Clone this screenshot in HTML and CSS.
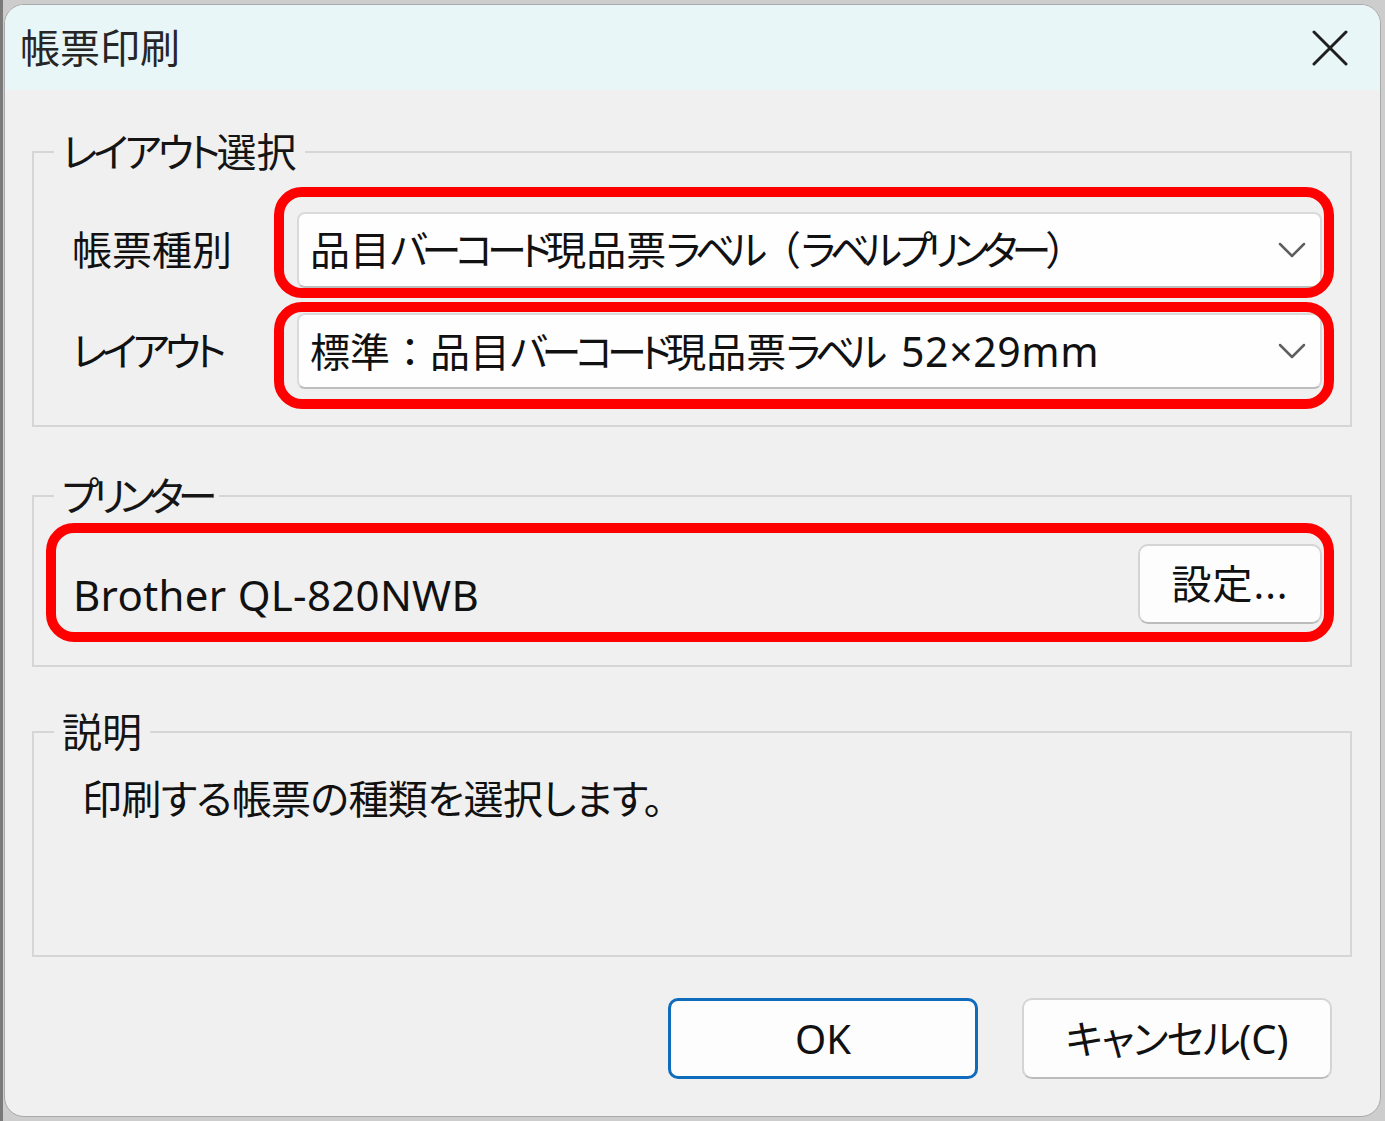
FILE: index.html
```html
<!DOCTYPE html>
<html lang="ja">
<head>
<meta charset="utf-8">
<title>帳票印刷</title>
<link rel="stylesheet" href="styles.css">
</head>
<body>
<div class="desk">
  <div class="dialog">
    <div class="titlebar">
      <span class="title">帳票印刷</span>
      <svg class="close" width="36" height="36" viewBox="0 0 36 36"><path d="M2 2 L34 34 M34 2 L2 34" stroke="#1f1f1f" stroke-width="3" stroke-linecap="round"/></svg>
    </div>
    <div class="content">
      <fieldset class="group g-layout">
        <legend class="legend"><span class="kn">レイアウト</span>選択</legend>
        <div class="row">
          <span class="label">帳票種別</span>
          <div class="combo">
            <span class="combo-text">品目<span class="kn">バーコード</span>現品票<span class="kn">ラベル</span><span class="fw">（</span><span class="kn">ラベルプリンター</span><span class="fw">）</span></span>
            <svg class="chev" width="28" height="16" viewBox="0 0 28 16"><path d="M2 2 L14 14 L26 2" fill="none" stroke="#5f5f5f" stroke-width="2.5" stroke-linecap="round" stroke-linejoin="round"/></svg>
            <div class="mark mark-1"></div>
          </div>
        </div>
        <div class="row row-2">
          <span class="label"><span class="kn">レイアウト</span></span>
          <div class="combo">
            <span class="combo-text">標準<span class="fw">：</span>品目<span class="kn">バーコード</span>現品票<span class="kn">ラベル</span><span class="num">52×29mm</span></span>
            <svg class="chev" width="28" height="16" viewBox="0 0 28 16"><path d="M2 2 L14 14 L26 2" fill="none" stroke="#5f5f5f" stroke-width="2.5" stroke-linecap="round" stroke-linejoin="round"/></svg>
            <div class="mark mark-2"></div>
          </div>
        </div>
      </fieldset>

      <fieldset class="group g-printer">
        <legend class="legend"><span class="kn">プリンター</span></legend>
        <div class="printer-row">
          <span class="printer-name">Brother QL-820NWB</span>
          <button class="btn btn-setting">設定...</button>
          <div class="mark mark-3"></div>
        </div>
      </fieldset>

      <fieldset class="group g-desc">
        <legend class="legend">説明</legend>
        <p class="desc">印刷する帳票の種類を選択します。</p>
      </fieldset>

      <div class="actions">
        <button class="btn btn-ok">OK</button>
        <button class="btn btn-cancel"><span class="kn-soft">キャンセル</span>(C)</button>
      </div>
    </div>
  </div>
</div>
</body>
</html>
```

FILE: styles.css
```css
* { box-sizing: border-box; }

html, body {
  margin: 0;
  padding: 0;
}

body {
  width: 1385px;
  height: 1121px;
  overflow: hidden;
  background: #cdcdcd;
  font-family: "Noto Sans", "Noto Sans CJK JP", sans-serif;
  font-feature-settings: "palt";
  color: #111;
}

.kn { letter-spacing: -5px; }
.kn-soft { letter-spacing: -1.5px; }
.fw { font-feature-settings: normal; }

.desk {
  height: 1121px;
  padding: 4px;
  border-left: 3px solid #7a7a7a;
  padding-left: 1px;
}

.dialog {
  width: 1377px;
  height: 1113px;
  background: #f0f0f0;
  border: 1px solid #a9a9a9;
  border-radius: 20px;
  overflow: hidden;
  display: flex;
  flex-direction: column;
}

.titlebar {
  height: 85px;
  flex: none;
  background: #e9f6f8;
  display: flex;
  align-items: center;
  justify-content: space-between;
  padding: 0 32px 0 15px;
}

.title {
  font-size: 40px;
  line-height: 50px;
  color: #262626;
}

.close { display: block; }

.content {
  padding: 0 28px 0 27px;
}

.group {
  margin: 0;
  min-width: 0;
  border: 2px solid #d6d6d6;
}

.legend {
  font-size: 40px;
  line-height: 50px;
  padding: 0 8px;
  color: #151515;
}
.legend .kn { letter-spacing: -4px; }

.g-layout {
  margin-top: 37px;
  padding: 35px 28px 36px 38px;
}
.g-layout .legend { margin-left: -18px; }

.row {
  display: grid;
  grid-template-columns: 225px 1fr;
  align-items: center;
}
.row-2 { margin-top: 25px; }

.label {
  font-size: 40px;
  line-height: 50px;
}

.combo {
  position: relative;
  height: 76px;
  background: #fefefe;
  border: 2px solid #dadada;
  border-bottom-color: #bdbdbd;
  border-radius: 8px;
  display: flex;
  align-items: center;
  justify-content: space-between;
  padding: 0 14px 0 11px;
}

.combo-text {
  font-size: 40px;
  line-height: 50px;
  white-space: nowrap;
}
.combo-text .kn { letter-spacing: -6px; }

.num {
  margin-left: 20px;
  font-size: 41px;
  letter-spacing: 0.6px;
}

.chev { display: block; }

.mark {
  position: absolute;
  border: 10px solid #ff0000;
  border-radius: 28px;
  pointer-events: none;
}
.mark-1 { top: -27px; bottom: -12px; left: -25px; right: -14px; }
.mark-2 { top: -13px; bottom: -22px; left: -25px; right: -14px; }
.mark-3 { top: -21px; bottom: -18px; left: -27px; right: -12px; }

.g-printer {
  margin-top: 44px;
  padding: 23px 28px 41px 39px;
}
.g-printer .legend { margin-left: -19px; }
.g-printer .legend .kn { letter-spacing: -6px; }

.printer-row {
  position: relative;
  display: flex;
  align-items: center;
  justify-content: space-between;
  height: 80px;
}

.printer-name {
  font-size: 42px;
  line-height: 50px;
  letter-spacing: 0.3px;
  margin-top: 22px;
}

.btn {
  font-family: inherit;
  font-feature-settings: "palt";
  color: #111;
  background: #fdfdfd;
  border: 2px solid #d4d4d4;
  border-bottom-color: #bcbcbc;
  border-radius: 10px;
  padding: 0;
  font-size: 40px;
  line-height: 50px;
}

.btn-setting {
  width: 184px;
  height: 80px;
  letter-spacing: 1px;
}

.g-desc {
  margin-top: 40px;
  padding: 17px 28px 131px 48px;
}
.g-desc .legend { margin-left: -28px; }

.desc {
  margin: 0;
  font-size: 40px;
  line-height: 50px;
  letter-spacing: -0.6px;
}

.actions {
  margin-top: 41px;
  display: flex;
  justify-content: flex-end;
  gap: 44px;
  padding-right: 20px;
}

.btn-ok,
.btn-cancel {
  width: 310px;
  height: 81px;
}

.btn-ok {
  border: 3px solid #0f6cbd;
}
```
